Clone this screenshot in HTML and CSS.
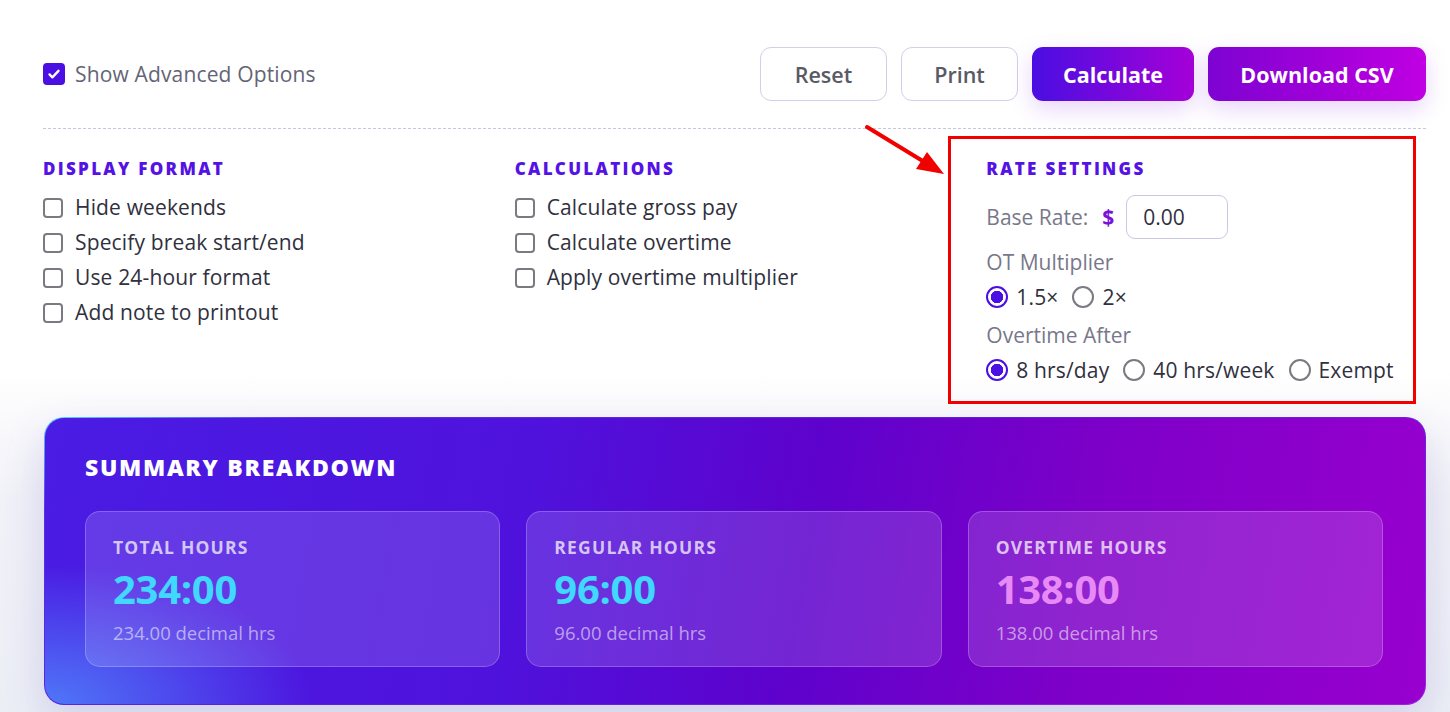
FILE: index.html
```html
<!DOCTYPE html>
<html lang="en">
<head>
<meta charset="utf-8">
<title>Timesheet Calculator</title>
<link rel="stylesheet" href="styles.css">
</head>
<body>
<main class="page">
  <div class="toolbar">
    <label class="check check-main">
      <span class="box checked"><svg viewBox="0 0 20 20"><path d="M5 10.5l3.2 3.2L15 6.5" fill="none" stroke="#fff" stroke-width="2.6" stroke-linecap="round" stroke-linejoin="round"/></svg></span>
      Show Advanced Options
    </label>
    <div class="actions">
      <button class="btn btn-ghost btn-reset">Reset</button>
      <button class="btn btn-ghost">Print</button>
      <button class="btn btn-primary">Calculate</button>
      <button class="btn btn-accent">Download CSV</button>
    </div>
  </div>

  <div class="options">
    <div class="col">
      <h3 class="col-title">Display Format</h3>
      <label class="check"><span class="box"></span>Hide weekends</label>
      <label class="check"><span class="box"></span>Specify break start/end</label>
      <label class="check"><span class="box"></span>Use 24-hour format</label>
      <label class="check"><span class="box"></span>Add note to printout</label>
    </div>
    <div class="col">
      <h3 class="col-title">Calculations</h3>
      <label class="check"><span class="box"></span>Calculate gross pay</label>
      <label class="check"><span class="box"></span>Calculate overtime</label>
      <label class="check"><span class="box"></span>Apply overtime multiplier</label>
    </div>
    <div class="col col-rate">
      <h3 class="col-title">Rate Settings</h3>
      <div class="rate-row">
        <span class="muted">Base Rate:</span>
        <span class="dollar">$</span>
        <span class="rate-input">0.00</span>
      </div>
      <div class="muted field-label">OT Multiplier</div>
      <div class="radios">
        <label class="radio"><span class="dot on"></span>1.5×</label>
        <label class="radio"><span class="dot"></span>2×</label>
      </div>
      <div class="muted field-label">Overtime After</div>
      <div class="radios">
        <label class="radio"><span class="dot on"></span>8 hrs/day</label>
        <label class="radio"><span class="dot"></span>40 hrs/week</label>
        <label class="radio"><span class="dot"></span>Exempt</label>
      </div>
      <div class="callout-box"></div>
      <svg class="callout-arrow" width="90" height="60" viewBox="0 0 90 60">
        <line x1="3" y1="3" x2="62" y2="39" stroke="#f20000" stroke-width="4" stroke-linecap="round"/>
        <polygon points="80,50 52,45 63,28" fill="#f20000"/>
      </svg>
    </div>
  </div>

  <section class="summary">
    <h2 class="summary-title">Summary Breakdown</h2>
    <div class="stats">
      <div class="stat">
        <div class="stat-label">Total Hours</div>
        <div class="stat-value cyan">234:00</div>
        <div class="stat-sub">234.00 decimal hrs</div>
      </div>
      <div class="stat">
        <div class="stat-label">Regular Hours</div>
        <div class="stat-value cyan">96:00</div>
        <div class="stat-sub">96.00 decimal hrs</div>
      </div>
      <div class="stat">
        <div class="stat-label">Overtime Hours</div>
        <div class="stat-value pink">138:00</div>
        <div class="stat-sub">138.00 decimal hrs</div>
      </div>
    </div>
  </section>
</main>
</body>
</html>
```

FILE: styles.css
```css
* { box-sizing: border-box; }

html, body {
  margin: 0;
  height: 100%;
}

body {
  font-family: "Open Sans", "Noto Sans", sans-serif;
  color: #2e2e3c;
  background: linear-gradient(180deg, #ffffff 0%, #ffffff 52%, #f1f1f8 70%, #eceef6 100%);
  overflow: hidden;
}

.page {
  padding: 47px 24px 0 43px;
}

/* top bar */
.toolbar {
  display: flex;
  align-items: center;
  justify-content: space-between;
  padding-bottom: 27px;
  border-bottom: 1.5px dashed #c4c7de;
}

.check {
  display: flex;
  align-items: center;
  gap: 12px;
  font-size: 21px;
  letter-spacing: 0.15px;
  line-height: 35px;
  color: #30303e;
}

.check-main {
  gap: 10px;
  color: #646476;
}

.box {
  width: 20px;
  height: 20px;
  border: 2px solid #7a7a80;
  border-radius: 4px;
  flex: none;
  display: flex;
  align-items: center;
  justify-content: center;
}

.box.checked {
  width: 22px;
  height: 22px;
  background: #4b0fe3;
  border-color: #4b0fe3;
}

.box svg { width: 18px; height: 18px; }

.actions {
  display: flex;
  gap: 14px;
}

.btn {
  height: 54px;
  padding: 0;
  border-radius: 11px;
  font-family: inherit;
  font-size: 21.5px;
  font-weight: 600;
}

.btn-ghost {
  background: #fff;
  border: 1.5px solid #d2cfe8;
  color: #5a5a66;
  width: 117px;
}

.btn-reset { width: 127px; }

.btn-primary,
.btn-accent {
  border: none;
  color: #fff;
  font-weight: 700;
  box-shadow: 0 8px 22px rgba(150, 60, 230, 0.22);
}

.btn-primary {
  width: 162px;
  background: linear-gradient(90deg, #4a0ee2 0%, #8a05da 70%, #a500d8 100%);
}

.btn-accent {
  width: 218px;
  background: linear-gradient(90deg, #7d03d2 0%, #a500d9 60%, #c000e2 100%);
}

/* option columns */
.options {
  display: grid;
  grid-template-columns: repeat(3, 1fr);
  align-items: start;
  column-gap: 32px;
  padding-top: 29px;
  height: 275px;
}

.col-title {
  margin: 0 0 10px;
  font-size: 17px;
  font-weight: 800;
  letter-spacing: 2.3px;
  text-transform: uppercase;
  color: #5512e4;
  line-height: 22px;
}

.col-rate {
  position: relative;
}

.muted { color: #78788a; }

.rate-row {
  display: flex;
  align-items: center;
  gap: 12px;
  font-size: 21px;
  margin-top: 15px;
}

.dollar {
  color: #7a12d8;
  font-weight: 700;
  margin-left: 2px;
}

.rate-input {
  width: 102px;
  height: 44px;
  border: 1.5px solid #cac8e2;
  border-radius: 9px;
  padding-left: 16px;
  display: flex;
  align-items: center;
  color: #30303e;
  font-size: 21px;
}

.field-label {
  font-size: 21px;
  line-height: 26px;
  margin-top: 10px;
}

.radios {
  display: flex;
  gap: 14px;
  margin-top: 7px;
}

.radio {
  display: flex;
  align-items: center;
  gap: 8px;
  font-size: 21px;
  letter-spacing: 0.15px;
  line-height: 30px;
  color: #30303e;
}

.dot {
  width: 22px;
  height: 22px;
  border-radius: 50%;
  border: 2px solid #7a7a80;
  flex: none;
}

.dot.on {
  border-color: #4b0fe3;
  background: radial-gradient(circle, #4b0fe3 0 6px, #fff 6.5px);
}

/* annotation around rate settings */
.callout-box {
  position: absolute;
  left: -38px;
  top: -22px;
  right: 10px;
  bottom: -19px;
  border: 3px solid #f20000;
  pointer-events: none;
}

.callout-arrow {
  position: absolute;
  left: -122px;
  top: -34px;
}

/* summary */
.summary {
  margin: 13px 0 0 1px;
  height: 288px;
  border-radius: 20px;
  padding: 35px 42px 0 40px;
  border: 1.5px solid transparent;
  background:
    radial-gradient(ellipse 380px 200px at 0% 100%, rgba(80, 150, 255, 0.75), rgba(80, 150, 255, 0) 70%) padding-box,
    linear-gradient(100deg, #4a1ce4 0%, #4f12dc 35%, #5e02cc 55%, #7e00c8 75%, #9800cf 100%) padding-box,
    linear-gradient(160deg, #5fd2ff 0%, #5a30ea 12%, #5a1ee0 50%, #a020e0 100%) border-box;
  box-shadow: 0 14px 40px rgba(70, 60, 160, 0.18);
  color: #fff;
}

.summary-title {
  margin: 0 0 30px;
  font-size: 23px;
  font-weight: 800;
  letter-spacing: 1.7px;
  text-transform: uppercase;
  line-height: 28px;
}

.stats {
  display: grid;
  grid-template-columns: repeat(3, 1fr);
  gap: 26px;
}

.stat {
  height: 156px;
  border-radius: 15px;
  background: rgba(255, 255, 255, 0.14);
  border: 1.5px solid rgba(255, 255, 255, 0.22);
  padding: 24px 27px 0;
}

.stat-label {
  font-size: 17.5px;
  font-weight: 700;
  letter-spacing: 1.2px;
  text-transform: uppercase;
  color: rgba(255, 255, 255, 0.72);
  line-height: 22px;
}

.stat-value {
  font-size: 40px;
  font-weight: 700;
  line-height: 48px;
  margin-top: 7px;
  letter-spacing: -0.3px;
}

.cyan { color: #40d8ff; }
.pink { color: #e88af6; }

.stat-sub {
  font-size: 18.5px;
  color: rgba(255, 255, 255, 0.55);
  line-height: 24px;
  margin-top: 8px;
}
```
